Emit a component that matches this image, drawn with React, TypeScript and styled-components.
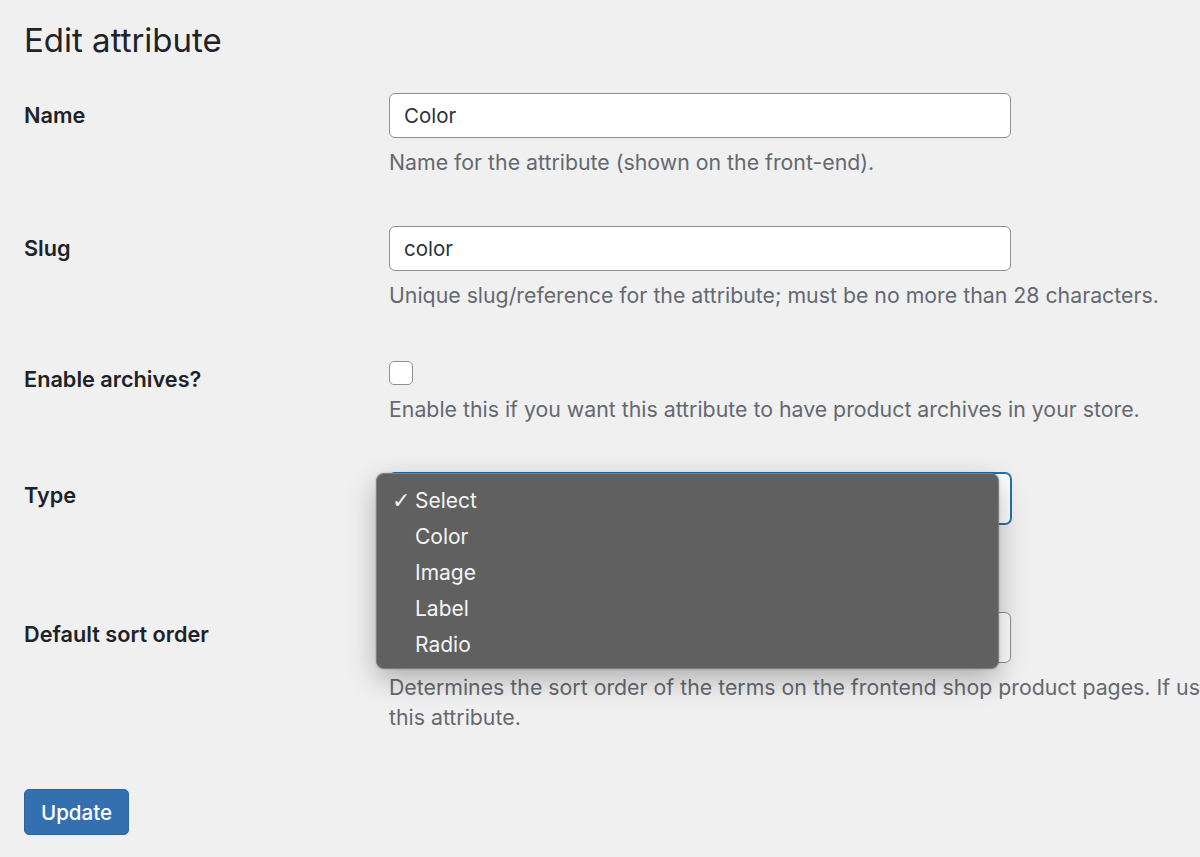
import React from 'react';
import styled, { createGlobalStyle } from 'styled-components';

const GlobalStyle = createGlobalStyle`
  html, body {
    margin: 0;
    padding: 0;
    background: #f0f0f1;
    overflow: hidden;
  }
  body {
    font-family: Inter, "Noto Sans", "Liberation Sans", sans-serif;
    color: #1d2327;
  }
`;

const Page = styled.div`
  padding: 18px 0 0 24px;
  width: 1400px;
  min-height: 857px;
  box-sizing: border-box;
`;

const Title = styled.h1`
  margin: 0 0 7px;
  font-size: 33px;
  line-height: 44px;
  font-weight: 400;
  color: #1d2327;
`;

const Row = styled.div`
  display: grid;
  grid-template-columns: 365px 1fr;
  padding: 24px 0 25px;
`;

const Label = styled.label<{ $line?: number }>`
  font-size: 21.7px;
  font-weight: 600;
  line-height: ${(p) => p.$line ?? 45}px;
  color: #1d2327;
`;

const Field = styled.div`
  position: relative;
`;

const TextInput = styled.input`
  display: block;
  box-sizing: border-box;
  width: 622px;
  height: 45px;
  padding: 0 14px;
  border: 1.5px solid #8c8f94;
  border-radius: 6px;
  background: #fff;
  font-family: inherit;
  font-size: 20.5px;
  color: #2c3338;
  outline: none;
`;

const Checkbox = styled.span`
  display: block;
  box-sizing: border-box;
  width: 24px;
  height: 24px;
  margin-top: 2px;
  border: 1.5px solid #8c8f94;
  border-radius: 5px;
  background: #fff;
`;

const SelectBox = styled.div<{ $focus?: boolean }>`
  box-sizing: border-box;
  width: 622px;
  height: 51px;
  display: flex;
  align-items: center;
  justify-content: space-between;
  padding: 0 12px 0 14px;
  border: 1.5px solid ${(p) => (p.$focus ? '#2271b1' : '#8c8f94')};
  box-shadow: ${(p) => (p.$focus ? '0 0 0 1px #2271b1' : 'none')};
  border-radius: 6px;
  background: #fff;
  font-size: 20.5px;
  color: #2c3338;
`;

const Description = styled.p<{ $nowrap?: boolean }>`
  margin: 9px 0 0;
  font-size: 21.3px;
  line-height: 30px;
  color: #646970;
  white-space: ${(p) => (p.$nowrap ? 'nowrap' : 'normal')};
`;

const Menu = styled.ul`
  position: absolute;
  left: -13px;
  top: 0;
  width: 623px;
  margin: 0;
  padding: 8px 0 6px;
  list-style: none;
  box-sizing: border-box;
  background: #5f605f;
  border: 1px solid #7d7e7d;
  border-radius: 8px;
  box-shadow: 0 10px 28px rgba(0, 0, 0, 0.28), 0 0 2px rgba(0, 0, 0, 0.3);
  z-index: 10;
`;

const MenuItem = styled.li`
  display: flex;
  align-items: center;
  height: 36px;
  padding-left: 15px;
  font-size: 21px;
  color: #f4f4f4;
`;

const Check = styled.span`
  width: 23px;
  font-size: 22px;
  font-family: "DejaVu Sans", sans-serif;
`;

const Submit = styled.div`
  padding-top: 32px;
`;

const Button = styled.button`
  height: 46px;
  padding: 0 16px;
  border: 1px solid #2a66a6;
  border-radius: 5px;
  background: #3470b0;
  color: #fff;
  font-family: inherit;
  font-size: 20.5px;
  font-weight: 500;
  cursor: pointer;
`;

const Chevron = () => (
  <svg width="16" height="16" viewBox="0 0 20 20" fill="none">
    <path d="M5 7.5l5 5 5-5" stroke="#2c3338" strokeWidth="2" />
  </svg>
);

const typeOptions = ['Select', 'Color', 'Image', 'Label', 'Radio'];

const App = () => (
  <Page>
    <GlobalStyle />
    <Title>Edit attribute</Title>

    <Row>
      <Label>Name</Label>
      <Field>
        <TextInput defaultValue="Color" />
        <Description>Name for the attribute (shown on the front-end).</Description>
      </Field>
    </Row>

    <Row>
      <Label>Slug</Label>
      <Field>
        <TextInput defaultValue="color" />
        <Description>
          Unique slug/reference for the attribute; must be no more than 28 characters.
        </Description>
      </Field>
    </Row>

    <Row>
      <Label $line={40}>Enable archives?</Label>
      <Field>
        <Checkbox />
        <Description>
          Enable this if you want this attribute to have product archives in your store.
        </Description>
      </Field>
    </Row>

    <Row>
      <Label>Type</Label>
      <Field>
        <SelectBox $focus>
          <span>Select</span>
          <Chevron />
        </SelectBox>
        <Description>Determines how this attribute's values are displayed.</Description>
        <Menu>
          {typeOptions.map((o, i) => (
            <MenuItem key={o}>
              <Check>{i === 0 ? '✓' : ''}</Check>
              {o}
            </MenuItem>
          ))}
        </Menu>
      </Field>
    </Row>

    <Row>
      <Label>Default sort order</Label>
      <Field>
        <SelectBox>
          <span>Custom ordering</span>
          <Chevron />
        </SelectBox>
        <Description $nowrap>
          Determines the sort order of the terms on the frontend shop product pages. If using
          custom ordering, you can drag and drop the terms in
          <br />
          this attribute.
        </Description>
      </Field>
    </Row>

    <Submit>
      <Button>Update</Button>
    </Submit>
  </Page>
);

export default App;
